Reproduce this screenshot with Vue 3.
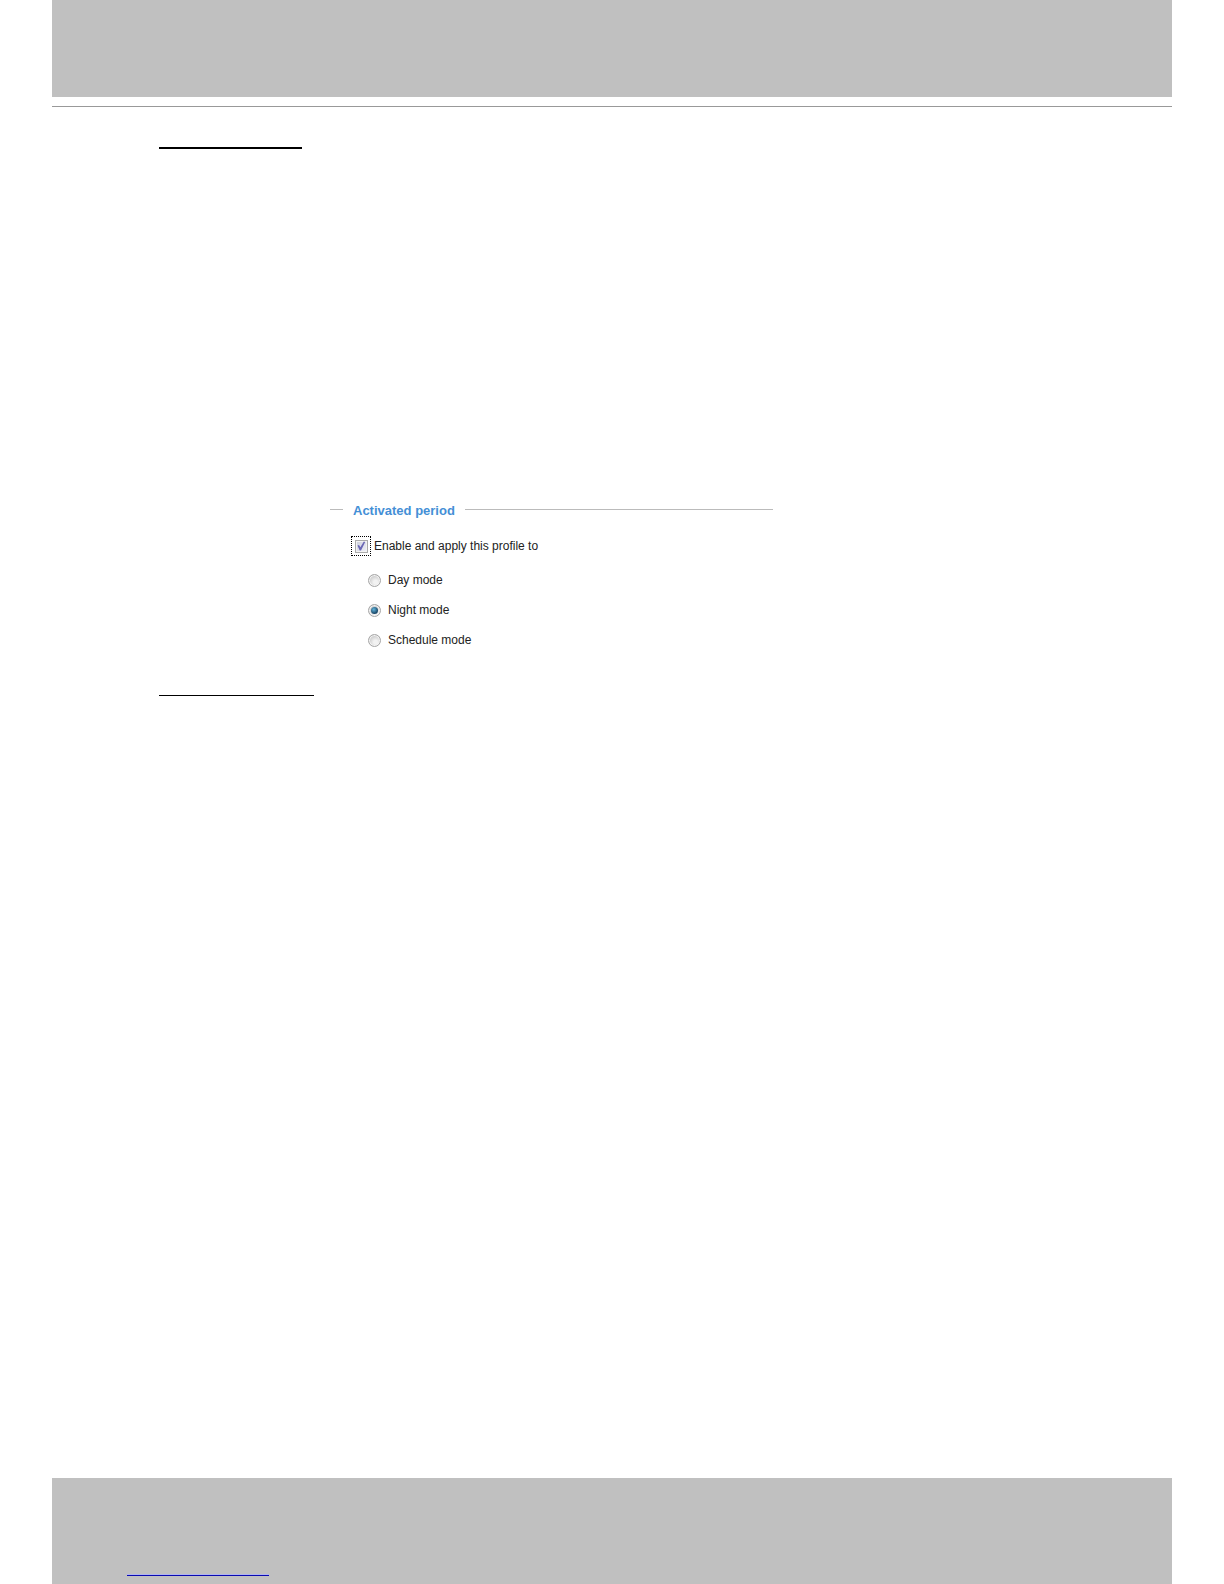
<template>
  <div class="page">
    <header class="band band-top"></header>
    <hr class="header-rule" />

    <main class="content">
      <hr class="heading-rule heading-rule-first" />

      <fieldset class="period">
        <legend class="period-title"><span>Activated period</span></legend>

        <div class="enable-row">
          <span class="focus-box">
            <input id="enable-profile" v-model="enabled" class="check" type="checkbox" />
          </span>
          <label for="enable-profile">Enable and apply this profile to</label>
        </div>

        <div class="modes">
          <div v-for="item in modes" :key="item.value" class="mode-row">
            <input
              :id="`mode-${item.value}`"
              v-model="mode"
              class="radio"
              type="radio"
              name="mode"
              :value="item.value"
            />
            <label :for="`mode-${item.value}`">{{ item.label }}</label>
          </div>
        </div>
      </fieldset>

      <hr class="heading-rule heading-rule-second" />
    </main>

    <footer class="band band-bottom">
      <a class="footer-link" href="#" aria-label="Website"></a>
    </footer>
  </div>
</template>

<script setup>
import { ref } from 'vue';

const enabled = ref(true);
const mode = ref('night');

const modes = [
  { value: 'day', label: 'Day mode' },
  { value: 'night', label: 'Night mode' },
  { value: 'schedule', label: 'Schedule mode' },
];
</script>

<style>
body {
  margin: 0;
  background: #fff;
}
</style>

<style scoped>
.page {
  display: flex;
  flex-direction: column;
  box-sizing: border-box;
  min-height: 100vh;
  padding: 0 52px;
  font-family: "Liberation Sans", Arial, sans-serif;
  font-size: 12px;
  line-height: 16px;
  color: #222;
}

.band {
  background: #c0c0c0;
}

.band-top {
  height: 97px;
}

.header-rule {
  width: 100%;
  height: 1px;
  margin: 9px 0 0;
  border: 0;
  background: #999;
}

.content {
  flex: 1;
  padding: 40px 107px;
}

.heading-rule {
  margin: 0;
  border: 0;
  background: #000;
}

.heading-rule-first {
  width: 143px;
  height: 2px;
}

.heading-rule-second {
  width: 155px;
  height: 1px;
  margin-top: 47px;
}

.period {
  box-sizing: border-box;
  max-width: 443px;
  min-width: 0;
  margin: 354px 0 0 171px;
  padding: 0;
  border: 0;
}

.period-title {
  display: flex;
  gap: 10px;
  width: 100%;
  padding: 0;
  font-size: 13px;
  font-weight: bold;
  color: #448fd6;
}

.period-title::before,
.period-title::after {
  content: "";
  height: 1px;
  margin-top: 6px;
  background: #bbb;
}

.period-title::before {
  width: 13px;
}

.period-title::after {
  flex: 1;
}

.enable-row {
  display: flex;
  align-items: center;
  gap: 3px;
  margin: 17px 0 0 21px;
}

.focus-box {
  display: flex;
  align-items: center;
  justify-content: center;
  width: 18px;
  height: 18px;
  border: 1px dotted #000;
}

.check,
.radio {
  display: block;
  flex: none;
  box-sizing: border-box;
  width: 13px;
  height: 13px;
  margin: 0;
  appearance: none;
}

.check {
  border: 1px solid #aaa;
  background: linear-gradient(135deg, #cdcfdc, #f0f0f8);
  box-shadow: inset 0 0 0 1px #f2f2f2;
}

.check:checked::after {
  content: "";
  display: block;
  width: 11px;
  height: 11px;
  background: #6a66b4;
  clip-path: polygon(18% 46%, 32% 42%, 44% 62%, 76% 10%, 88% 14%, 50% 90%, 38% 90%);
}

.modes {
  display: flex;
  flex-direction: column;
  gap: 14px;
  margin: 16px 0 0 38px;
}

.mode-row {
  display: flex;
  align-items: center;
  gap: 7px;
}

.radio {
  border: 1px solid #a6a6a6;
  border-radius: 50%;
  background: radial-gradient(circle at 60% 65%, #f2f2f2 20%, #c9c9c9 70%);
  box-shadow: inset 0 0 0 1px #f4f4f4;
}

.radio:checked::after {
  content: "";
  display: block;
  width: 7px;
  height: 7px;
  margin: 2px;
  border-radius: 50%;
  background: radial-gradient(circle at 40% 35%, #63b5dc, #1b4a6b 65%);
}

.band-bottom {
  display: flex;
  align-items: flex-end;
  box-sizing: border-box;
  height: 106px;
  padding: 0 75px 8px;
}

.footer-link {
  width: 142px;
  height: 1px;
  border-top: 1px solid #b0b4f0;
  background: #0a0ab0;
}
</style>
